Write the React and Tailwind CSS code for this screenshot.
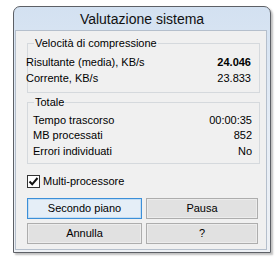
import React from "react";

function Row({ label, value, bold, className = "" }) {
  return (
    <div className={"flex items-center justify-between " + className}>
      <span>{label}</span>
      <span className={bold ? "font-bold" : ""}>{value}</span>
    </div>
  );
}

function Btn({ children, def, w }) {
  return (
    <div
      className={
        "h-[21px] flex items-center justify-center border " +
        w +
        " " +
        (def
          ? "border-[#3c8fd8] bg-[#e5eef7] shadow-[inset_0_0_0_1px_#c4ddf3]"
          : "border-[#adadad] bg-[#e1e1e1] shadow-[inset_0_0_0_1px_#ececec]")
      }
    >
      {children}
    </div>
  );
}

export default function App() {
  return (
    <div className="w-[280px] h-[257px] bg-white overflow-hidden pt-[6px] font-['Liberation_Sans',Arial,sans-serif] text-[11px] text-black">
      <div className="ml-[13px] w-[258px] h-[247px] border border-[#5d6066] rounded-t-[7px] bg-gradient-to-b from-[#d3e1f1] via-[#e6edf6] to-[#eef1f5] flex flex-col shadow-[2px_2px_2px_rgba(0,0,0,0.25)]">
        <div className="h-[23px] shrink-0 flex items-center justify-center text-[14px] pt-[2px] text-[#111]">
          Valutazione sistema
        </div>
        <div className="flex-1 ml-[1px] mr-[3px] mb-[2px] border border-[#b5bfcc] bg-[#f0f0f0] pl-[11px] pr-[6px] pt-[12px] flex flex-col">
          <div className="relative border border-[#d5d9dd] h-[50px] pt-[10px] pr-[8px]">
            <span className="absolute -top-[8px] left-[6px] px-[1px] bg-[#f0f0f0] leading-[14px]">
              Velocità di compressione
            </span>
            <Row className="h-[16px] -ml-[2px]" label="Risultante (media), KB/s" value="24.046" bold />
            <Row className="h-[16px] -ml-[2px]" label="Corrente, KB/s" value="23.833" />
          </div>
          <div className="relative border border-[#d5d9dd] h-[62px] mt-[9px] pt-[10px] pl-[5px] pr-[7px]">
            <span className="absolute -top-[8px] left-[6px] px-[1px] bg-[#f0f0f0] leading-[14px]">
              Totale
            </span>
            <Row className="h-[15px]" label="Tempo trascorso" value="00:00:35" />
            <Row className="h-[15px]" label="MB processati" value="852" />
            <Row className="h-[16px]" label="Errori individuati" value="No" />
          </div>
          <div className="mt-[11px] h-[13px] flex items-center gap-[3px]">
            <div className="w-[13px] h-[13px] border border-[#333] bg-white flex items-center justify-center">
              <svg width="11" height="11" viewBox="0 0 11 11">
                <path d="M1.5 5.5 L4.2 8.3 L9.5 2" fill="none" stroke="#111" strokeWidth="2" />
              </svg>
            </div>
            <span>Multi-processore</span>
          </div>
          <div className="mt-[10px] flex gap-[4px]">
            <Btn def w="w-[115px]">Secondo piano</Btn>
            <Btn w="w-[112px]">Pausa</Btn>
          </div>
          <div className="mt-[4px] flex gap-[4px]">
            <Btn w="w-[115px]">Annulla</Btn>
            <Btn w="w-[112px]">?</Btn>
          </div>
        </div>
      </div>
    </div>
  );
}
